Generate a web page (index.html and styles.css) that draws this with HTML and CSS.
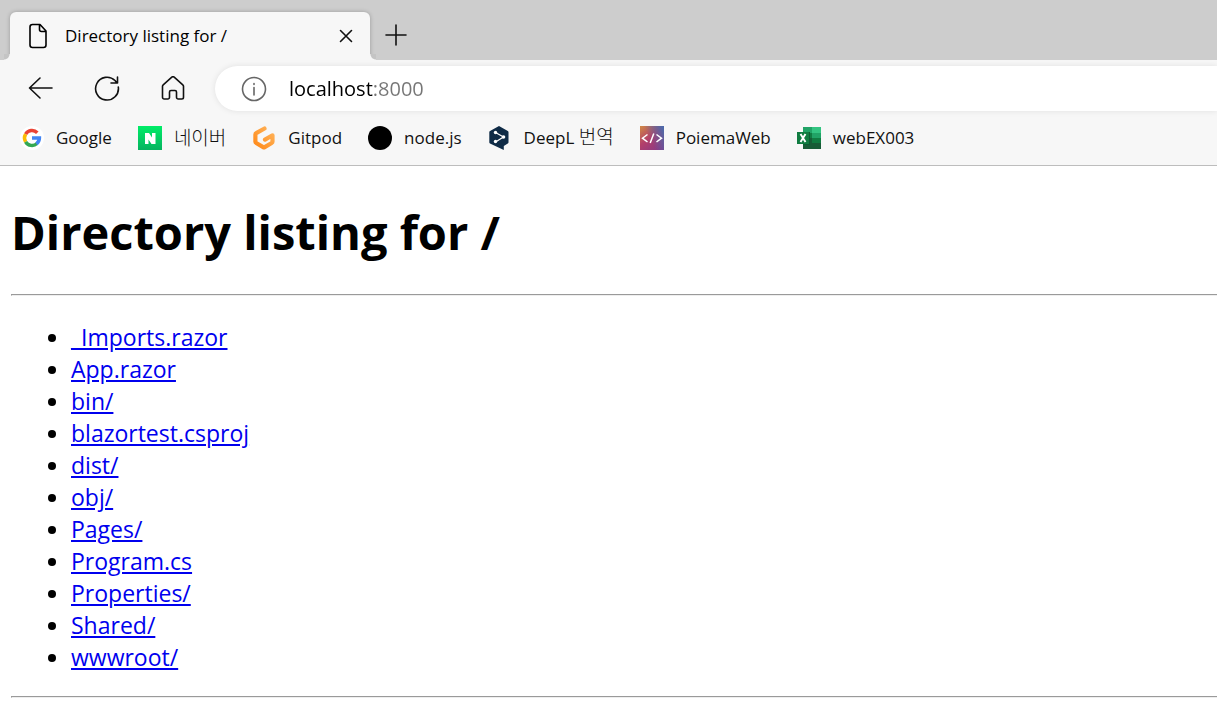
FILE: index.html
```html
<!DOCTYPE html>
<html lang="en">
<head>
<meta charset="utf-8">
<meta name="viewport" content="width=device-width, initial-scale=1">
<title>Directory listing for /</title>
<link rel="stylesheet" href="styles.css">
</head>
<body>
<header class="browser">
  <div class="tab-strip">
    <div class="tab">
      <svg class="icon" width="24" height="26" viewBox="0 0 24 26"><path d="M6.500 1.500h7.500l6 6.500v14a2.500 2.500 0 0 1-2.500 2.500h-11a2.500 2.500 0 0 1-2.500-2.500v-18a2.500 2.500 0 0 1 2.500-2.500zM13.500 1.500v5a2 2 0 0 0 2 2h4.500"/></svg>
      <span class="tab-title">Directory listing for /</span>
      <button class="icon-button tab-close" aria-label="Close tab"><svg class="icon" width="14" height="14" viewBox="0 0 14 14"><path d="M1.500 1.500l11 11M12.500 1.500L1.500 12.500"/></svg></button>
    </div>
    <button class="icon-button new-tab" aria-label="New tab"><svg class="icon" width="22" height="22" viewBox="0 0 22 22"><path d="M11 1v20M1 11h20"/></svg></button>
  </div>
  <div class="toolbar">
    <nav class="nav-buttons" aria-label="Navigation">
      <button class="icon-button" aria-label="Back"><svg class="icon" width="26" height="26" viewBox="0 0 26 26"><path d="M24 12H1.500M12 2L1.500 12l10.500 10"/></svg></button>
      <button class="icon-button" aria-label="Refresh"><svg class="icon" width="26" height="26" viewBox="0 0 26 26"><path d="M24.300 11A11.400 11.400 0 1 1 21 4.500l2 2.500M23.500 1v6h-6.500"/></svg></button>
      <button class="icon-button" aria-label="Home"><svg class="icon" width="26" height="26" viewBox="0 0 26 26"><path d="M11.800 1.200a1.800 1.800 0 0 1 2.400 0l8.600 7.600a2 2 0 0 1 .7 1.500v11a1.700 1.700 0 0 1-1.700 1.700h-3.600a1.700 1.700 0 0 1-1.700-1.700v-5.300a1.500 1.500 0 0 0-1.500-1.500h-4a1.500 1.500 0 0 0-1.500 1.500v5.300a1.700 1.700 0 0 1-1.700 1.700h-3.600a1.700 1.700 0 0 1-1.700-1.700v-11a2 2 0 0 1 .7-1.500z"/></svg></button>
    </nav>
    <div class="address-bar">
      <button class="icon-button info" aria-label="View site information"><svg class="icon" width="26" height="26" viewBox="0 0 26 26"><circle cx="13" cy="13" r="11.500"/><path d="M13 11.500v7.500M13 7.500v1"/></svg></button>
      <input class="address" type="text" value="localhost:8000" aria-label="Address" spellcheck="false">
    </div>
  </div>
  <nav class="bookmarks" aria-label="Bookmarks">
    <a class="bookmark" href="#"><svg width="24" height="24" viewBox="0 0 24 24"><circle cx="12" cy="12" r="12" fill="#fff"/><g fill="none" stroke-width="3.500"><path d="M5.600 8.200A7.400 7.400 0 0 1 17.300 6.800" stroke="#ea4335"/><path d="M5.600 15.800A7.400 7.400 0 0 1 5.600 8.200" stroke="#fbbc05"/><path d="M17 17.500A7.400 7.400 0 0 1 5.600 15.800" stroke="#34a853"/><path d="M12 12h7.400A7.400 7.400 0 0 1 16.500 17.800" stroke="#4285f4"/></g></svg>Google</a>
    <a class="bookmark" href="#"><svg width="24" height="24" viewBox="0 0 24 24"><defs><linearGradient id="naver" x2="0" y2="1"><stop stop-color="#00ed68"/><stop offset="1" stop-color="#06b35f"/></linearGradient></defs><path fill="url(#naver)" d="M0 0h24v24H0z"/><path fill="#fff" d="M7 7h4l3 4.500V7h3.500v11h-4L10.500 13.500V18H7z"/></svg><span class="korean" lang="ko">네이버</span></a>
    <a class="bookmark" href="#"><svg width="24" height="24" viewBox="0 0 24 24"><defs><linearGradient id="gitpod" x1="1" x2="0" y2="1"><stop stop-color="#ffb45b"/><stop offset="1" stop-color="#ff8a1a"/></linearGradient></defs><path d="M12.500 2.500L4.200 7.200a1.500 1.500 0 0 0-.8 1.300v7.200a1.500 1.500 0 0 0 .8 1.300l7 4.100a1.500 1.500 0 0 0 1.500 0l7-4.100a1.500 1.500 0 0 0 .8-1.300V9.300l-7.500 4.300" fill="none" stroke="url(#gitpod)" stroke-width="4.200" stroke-linecap="round" stroke-linejoin="round"/></svg>Gitpod</a>
    <a class="bookmark" href="#"><svg width="24" height="24" viewBox="0 0 24 24"><circle cx="12" cy="12" r="12"/></svg>node.js</a>
    <a class="bookmark" href="#"><svg width="24" height="24" viewBox="0 0 24 24"><path fill="#0f2b46" d="M11 0l8.800 5a1.500 1.500 0 0 1 .7 1.300v9.900a1.500 1.500 0 0 1-.7 1.300L15.800 20v4L2 17.500a1.500 1.500 0 0 1-.7-1.300V6.300A1.500 1.500 0 0 1 2 5z"/><path d="M7.500 6.500l8 4.500-8 5" fill="none" stroke="#fff" stroke-width="1.200"/><g fill="#fff"><circle cx="7.500" cy="6.500" r="1.700"/><circle cx="15.500" cy="11" r="1.800"/><circle cx="7.500" cy="15.500" r="1.700"/></g></svg><span>DeepL <span class="korean" lang="ko">번역</span></span></a>
    <a class="bookmark" href="#"><svg width="24" height="24" viewBox="0 0 24 24"><defs><linearGradient id="poiema" x1="0" y1="0" x2=".8" y2="1"><stop stop-color="#d08a45"/><stop offset=".5" stop-color="#b33f6a"/><stop offset="1" stop-color="#8a3a86"/></linearGradient><linearGradient id="poiema-shade" x1=".4" y1=".5" x2="1" y2=".2"><stop stop-color="#4f68a8" stop-opacity="0"/><stop offset="1" stop-color="#4f68a8"/></linearGradient></defs><path fill="url(#poiema)" d="M0 0h24v24H0z"/><path fill="url(#poiema-shade)" d="M0 0h24v24H0z"/><path d="M7.500 8.500L2.500 12.200l5 3.800M16.500 8.500l5 3.700-5 3.800M13.800 7.500l-3.600 9.500" fill="none" stroke="#fff" stroke-width="1.500"/></svg>PoiemaWeb</a>
    <a class="bookmark" href="#"><svg width="24" height="24" viewBox="0 0 24 24"><path fill="#21a366" d="M6 1h9v6H6z"/><path fill="#33c481" d="M15 1h9v6h-9z"/><path fill="#107c41" d="M6 7h9v5H6z"/><path fill="#21a366" d="M15 7h9v5h-9z"/><path fill="#185c37" d="M6 12h9v11H6z"/><path fill="#107c41" d="M15 12h9v5h-9z"/><path fill="#185c37" d="M15 17h9v6h-9z"/><path fill="#0b5d31" d="M6 6h7v13H6z"/><path fill="#107c41" d="M0 6h12v12H0z"/><path d="M3.500 8l5 8M8.500 8l-5 8" stroke="#fff" stroke-width="1.900"/></svg>webEX003</a>
  </nav>
</header>
<main class="listing">
  <h1 class="heading">Directory listing for /</h1>
  <hr class="rule">
  <ul class="files">
    <li><a href="_Imports.razor">_Imports.razor</a></li>
    <li><a href="App.razor">App.razor</a></li>
    <li><a href="bin/">bin/</a></li>
    <li><a href="blazortest.csproj">blazortest.csproj</a></li>
    <li><a href="dist/">dist/</a></li>
    <li><a href="obj/">obj/</a></li>
    <li><a href="Pages/">Pages/</a></li>
    <li><a href="Program.cs">Program.cs</a></li>
    <li><a href="Properties/">Properties/</a></li>
    <li><a href="Shared/">Shared/</a></li>
    <li><a href="wwwroot/">wwwroot/</a></li>
  </ul>
  <hr class="rule">
</main>
</body>
</html>
```
FILE: styles.css
```css
* { box-sizing: border-box; }

body {
  margin: 0;
  background: #fff;
  color: #000;
  font-family: "Open Sans", "Noto Sans CJK KR", sans-serif;
}

.browser {
  background: #f7f7f7;
  border-bottom: 1px solid #bdbdbd;
  font-size: 17px;
  overflow: hidden;
}

.icon {
  display: block;
  fill: none;
  stroke: currentColor;
  stroke-width: 1.6;
  stroke-linecap: round;
  stroke-linejoin: round;
}

.icon-button {
  display: grid;
  place-items: center;
  padding: 0;
  border: 0;
  background: none;
  color: #111;
}

.tab-strip {
  display: flex;
  align-items: flex-end;
  height: 60px;
  padding-left: 10px;
  background: #cdcdcd;
  overflow: hidden;
}

.tab {
  position: relative;
  display: flex;
  align-items: center;
  width: 360px;
  height: 48px;
  padding: 0 16px;
  border-radius: 6px 6px 0 0;
  background: #f7f7f7;
  box-shadow: 0 0 4px #00000040;
}

.tab::before,
.tab::after {
  content: "";
  position: absolute;
  bottom: 0;
  width: 6px;
  height: 6px;
}

.tab::before {
  right: 100%;
  background: radial-gradient(circle at 0 0, #c4c4c4 5px, #f7f7f7 6px);
}

.tab::after {
  left: 100%;
  background: radial-gradient(circle at 100% 0, #c4c4c4 5px, #f7f7f7 6px);
}

.tab-title {
  flex: 1;
  margin-left: 15px;
  line-height: 24px;
}

.tab-close {
  width: 16px;
  height: 24px;
}

.new-tab {
  width: 52px;
  height: 50px;
}

.toolbar {
  display: flex;
  align-items: center;
  gap: 29px;
  padding: 6px 0 0 28px;
}

.nav-buttons {
  display: flex;
  gap: 40px;
}

.address-bar {
  flex: 1;
  display: flex;
  align-items: center;
  gap: 22px;
  height: 45px;
  padding-left: 26px;
  border-radius: 23px 0 0 23px;
  background: #fff;
  box-shadow: 0 0 6px #00000018;
}

.info { color: #666; }

.address {
  flex: 1;
  min-width: 0;
  height: 40px;
  padding: 0;
  border: 0;
  outline: 0;
  background: linear-gradient(to right, #000 84px, #767676 84px);
  background-clip: text;
  color: transparent;
  font: inherit;
  font-size: 20px;
}

.bookmarks {
  display: flex;
  align-items: center;
  gap: 26px;
  height: 54px;
  padding-left: 20px;
}

.bookmark {
  display: flex;
  align-items: center;
  gap: 12px;
  color: #111;
  line-height: 24px;
  text-decoration: none;
  white-space: nowrap;
}

.korean {
  font-size: 19px;
  font-weight: 300;
  line-height: 20px;
}

.listing {
  padding-left: 11px;
  font-size: 23px;
  line-height: 32px;
}

.heading {
  margin: 32px 0 28px;
  font-size: 47px;
  line-height: 68px;
}

.rule {
  margin: 0;
  border: 1px solid #9a9a9a;
  border-bottom-color: #eee;
  border-right: 0;
}

.files {
  margin: 25px 0 23px;
  padding-left: 60px;
}

.files a {
  color: #00e;
}
```
